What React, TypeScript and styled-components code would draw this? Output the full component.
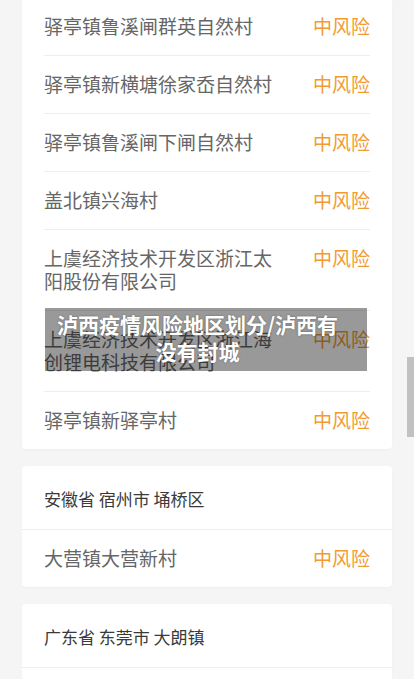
import React from 'react';
import styled, { createGlobalStyle } from 'styled-components';

const GlobalStyle = createGlobalStyle`
  html, body {
    margin: 0;
    padding: 0;
    background: #f5f5f5;
    font-family: "Noto Sans CJK SC", "Noto Sans", sans-serif;
  }
`;

const Page = styled.div`
  position: relative;
  height: 679px;
  overflow: hidden;
  padding: 0 22px;
  display: flex;
  flex-direction: column;
  gap: 17px;
`;

const Card = styled.div<{ $offset?: number }>`
  background: #fff;
  border-radius: 4px;
  margin-top: ${(p) => p.$offset || 0}px;
  box-shadow: 0 1px 2px rgba(0, 0, 0, 0.03);
  flex-shrink: 0;
`;

const CardHeader = styled.div`
  height: 62px;
  padding: 1px 22px 0;
  display: flex;
  align-items: center;
  border-bottom: 1px solid #eee;
  font-size: 17px;
  color: #3a3a3a;
`;

const List = styled.div`
  padding: 0 22px;
`;

const Row = styled.div`
  display: flex;
  align-items: flex-start;
  justify-content: space-between;
  padding: 16px 0 18px;
  line-height: 23px;
  font-size: 19px;
  & + & {
    border-top: 1px solid #eee;
  }
`;

const BlankRow = styled.div`
  height: 57px;
`;

const Name = styled.div`
  width: 236px;
  color: #666;
`;

const Risk = styled.div`
  color: #f29b30;
  white-space: nowrap;
`;

const Banner = styled.div`
  position: absolute;
  left: 45px;
  top: 308px;
  width: 322px;
  height: 63px;
  box-sizing: border-box;
  padding: 3px 28px 0 11px;
  background: rgba(0, 0, 0, 0.4);
  color: #fff;
  font-weight: bold;
  font-size: 21px;
  line-height: 27px;
  text-align: center;
  text-shadow: 0 0 2px rgba(0, 0, 0, 0.4);
`;

const ScrollThumb = styled.div`
  position: absolute;
  right: 0;
  top: 357px;
  width: 7px;
  height: 80px;
  background: #c1c1c1;
`;

const firstRows = [
  '驿亭镇鲁溪闸群英自然村',
  '驿亭镇新横塘徐家岙自然村',
  '驿亭镇鲁溪闸下闸自然村',
  '盖北镇兴海村',
  '上虞经济技术开发区浙江太阳股份有限公司',
  '上虞经济技术开发区浙江海创锂电科技有限公司',
  '驿亭镇新驿亭村',
];

const RiskRow = ({ name }: { name: string }) => (
  <Row>
    <Name>{name}</Name>
    <Risk>中风险</Risk>
  </Row>
);

export default function App() {
  return (
    <>
      <GlobalStyle />
      <Page>
        <Card $offset={-2}>
          <List>
            {firstRows.map((n) => (
              <RiskRow key={n} name={n} />
            ))}
          </List>
        </Card>
        <Card>
          <CardHeader>安徽省 宿州市 埇桥区</CardHeader>
          <List>
            <RiskRow name="大营镇大营新村" />
          </List>
        </Card>
        <Card>
          <CardHeader>广东省 东莞市 大朗镇</CardHeader>
          <BlankRow />
        </Card>
        <Banner>泸西疫情风险地区划分/泸西有没有封城</Banner>
        <ScrollThumb />
      </Page>
    </>
  );
}
